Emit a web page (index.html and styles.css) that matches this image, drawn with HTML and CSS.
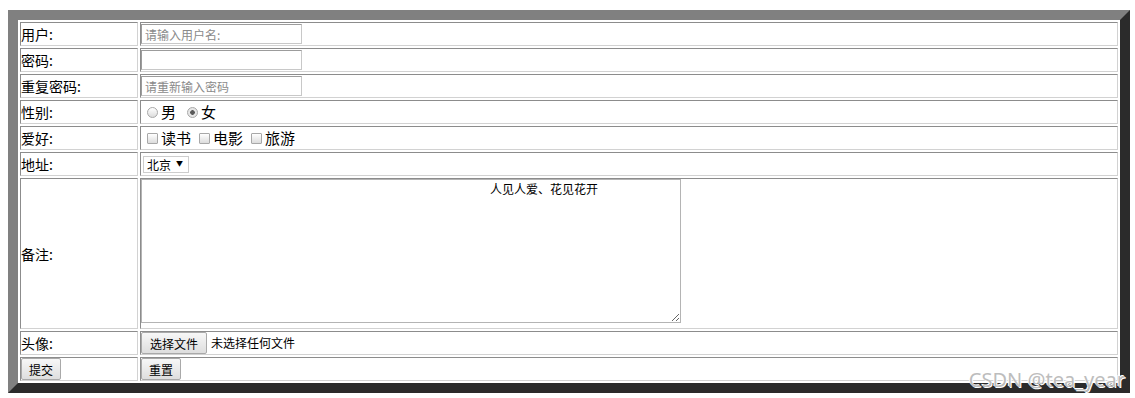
FILE: index.html
```html
<!DOCTYPE html>
<html lang="zh">
<head>
<meta charset="utf-8">
<title>注册</title>
<link rel="stylesheet" href="styles.css">
</head>
<body>
<form class="reg">
  <table class="form-table">
    <colgroup><col class="col-label"><col class="col-field"></colgroup>
    <tr>
      <td class="label">用户:</td>
      <td><div class="line"><input class="text" type="text" placeholder="请输入用户名:"></div></td>
    </tr>
    <tr>
      <td class="label">密码:</td>
      <td><div class="line"><input class="text" type="password"></div></td>
    </tr>
    <tr>
      <td class="label">重复密码:</td>
      <td><div class="line"><input class="text" type="password" placeholder="请重新输入密码"></div></td>
    </tr>
    <tr>
      <td class="label">性别:</td>
      <td><div class="line opts radios">
        <label class="opt"><input class="radio" type="radio" name="sex">男</label>
        <label class="opt"><input class="radio" type="radio" name="sex" checked>女</label>
      </div></td>
    </tr>
    <tr>
      <td class="label">爱好:</td>
      <td><div class="line opts checks">
        <label class="opt"><input class="check" type="checkbox">读书</label>
        <label class="opt"><input class="check" type="checkbox">电影</label>
        <label class="opt"><input class="check" type="checkbox">旅游</label>
      </div></td>
    </tr>
    <tr>
      <td class="label">地址:</td>
      <td><div class="line"><span class="select-wrap"><select class="select"><option>北京</option><option>上海</option><option>广州</option></select></span></div></td>
    </tr>
    <tr class="tall">
      <td class="label">备注:</td>
      <td><textarea class="memo">人见人爱、花见花开</textarea></td>
    </tr>
    <tr>
      <td class="label">头像:</td>
      <td><div class="line"><button type="button" class="btn file-btn">选择文件</button><span class="file-name">未选择任何文件</span></div></td>
    </tr>
    <tr>
      <td class="label"><div class="line"><button type="submit" class="btn">提交</button></div></td>
      <td><div class="line"><button type="reset" class="btn">重置</button></div></td>
    </tr>
  </table>
</form>
<div class="watermark">CSDN @tea_year</div>
</body>
</html>
```
FILE: styles.css
```css
html, body {
  background: #fff;
}
body {
  margin: 10px 5px 5px 8px;
  position: relative;
  font-family: "Noto Sans CJK SC", "Noto Sans", sans-serif;
  color: #000;
}
.reg {
  margin: 0;
}
.form-table {
  width: 1122px;
  table-layout: fixed;
  border-collapse: separate;
  border-spacing: 2px;
  border: 10px solid;
  border-color: #808080 #2b2b2b #2b2b2b #808080;
  background: #fff;
}
.col-label {
  width: 118px;
}
.form-table td {
  border: 1px solid;
  border-color: #8c8c8c #d2d2d2 #d2d2d2 #8c8c8c;
  padding: 0;
  height: 22px;
  font-size: 14px;
  line-height: 22px;
  vertical-align: middle;
}
.form-table tr.tall td {
  height: 149px;
}
.line {
  display: flex;
  align-items: center;
  height: 22px;
}
.text {
  box-sizing: border-box;
  width: 161px;
  height: 20px;
  margin: 0;
  padding: 0 3px;
  border: 1px solid;
  border-color: #9c9c9c #c8c8c8 #c8c8c8 #9c9c9c;
  font-family: "Noto Sans CJK SC", sans-serif;
  font-size: 12px;
  outline: none;
}
.text::placeholder {
  color: #8a8a8a;
}
.opt {
  display: flex;
  align-items: center;
  font-size: 15px;
}
.radios .opt:first-child,
.checks .opt:first-child {
  margin-left: 6px;
}
.radios .opt + .opt {
  margin-left: 11px;
}
.checks .opt + .opt {
  margin-left: 8px;
}
.radio,
.check {
  appearance: none;
  -webkit-appearance: none;
  box-sizing: border-box;
  width: 11px;
  height: 11px;
  margin: 0 3px 0 0;
  border: 1px solid #a8a8a8;
  background: linear-gradient(#ffffff, #dcdcdc);
}
.radio {
  border-radius: 50%;
}
.radio:checked {
  background: radial-gradient(circle, #5a5a5a 0 2px, #e6e6e6 2.6px);
}
.check {
  border-radius: 1px;
}
.select-wrap {
  position: relative;
  display: inline-block;
  margin-left: 2px;
}
.select {
  appearance: none;
  -webkit-appearance: none;
  box-sizing: border-box;
  width: 46px;
  height: 17px;
  margin: 0;
  padding: 0 0 0 3px;
  border: 1px solid #cdcdcd;
  background: #fff;
  font-family: "Noto Sans CJK SC", sans-serif;
  font-size: 12px;
  line-height: 15px;
  color: #000;
  display: block;
}
.select-wrap::after {
  content: "▼";
  position: absolute;
  right: 6px;
  top: 3px;
  font-size: 7px;
  line-height: 9px;
  pointer-events: none;
}
.memo {
  display: block;
  box-sizing: border-box;
  width: 540px;
  height: 144px;
  margin: 0 0 5px 0;
  padding: 2px;
  border: 1px solid #b4b4b4;
  font-family: "Noto Sans CJK SC", sans-serif;
  font-size: 12px;
  line-height: 14px;
  text-indent: 346px;
  color: #000;
}
.btn {
  box-sizing: border-box;
  height: 22px;
  margin: 0;
  padding: 0 7px;
  border: 1px solid #a9a9a9;
  border-radius: 2px;
  background: linear-gradient(#f7f7f7, #dedede);
  font-family: "Noto Sans CJK SC", sans-serif;
  font-size: 12px;
  color: #000;
}
.file-btn {
  padding: 0 8px;
}
.file-name {
  margin-left: 4px;
  font-size: 12px;
}
.watermark {
  position: absolute;
  right: 5px;
  bottom: 2px;
  font-family: "Noto Sans", sans-serif;
  font-size: 20px;
  line-height: 22px;
  color: #bdbdbd;
  text-shadow: 1px 1px 0 #fff, -1px -1px 0 #fff;
  pointer-events: none;
}
```
